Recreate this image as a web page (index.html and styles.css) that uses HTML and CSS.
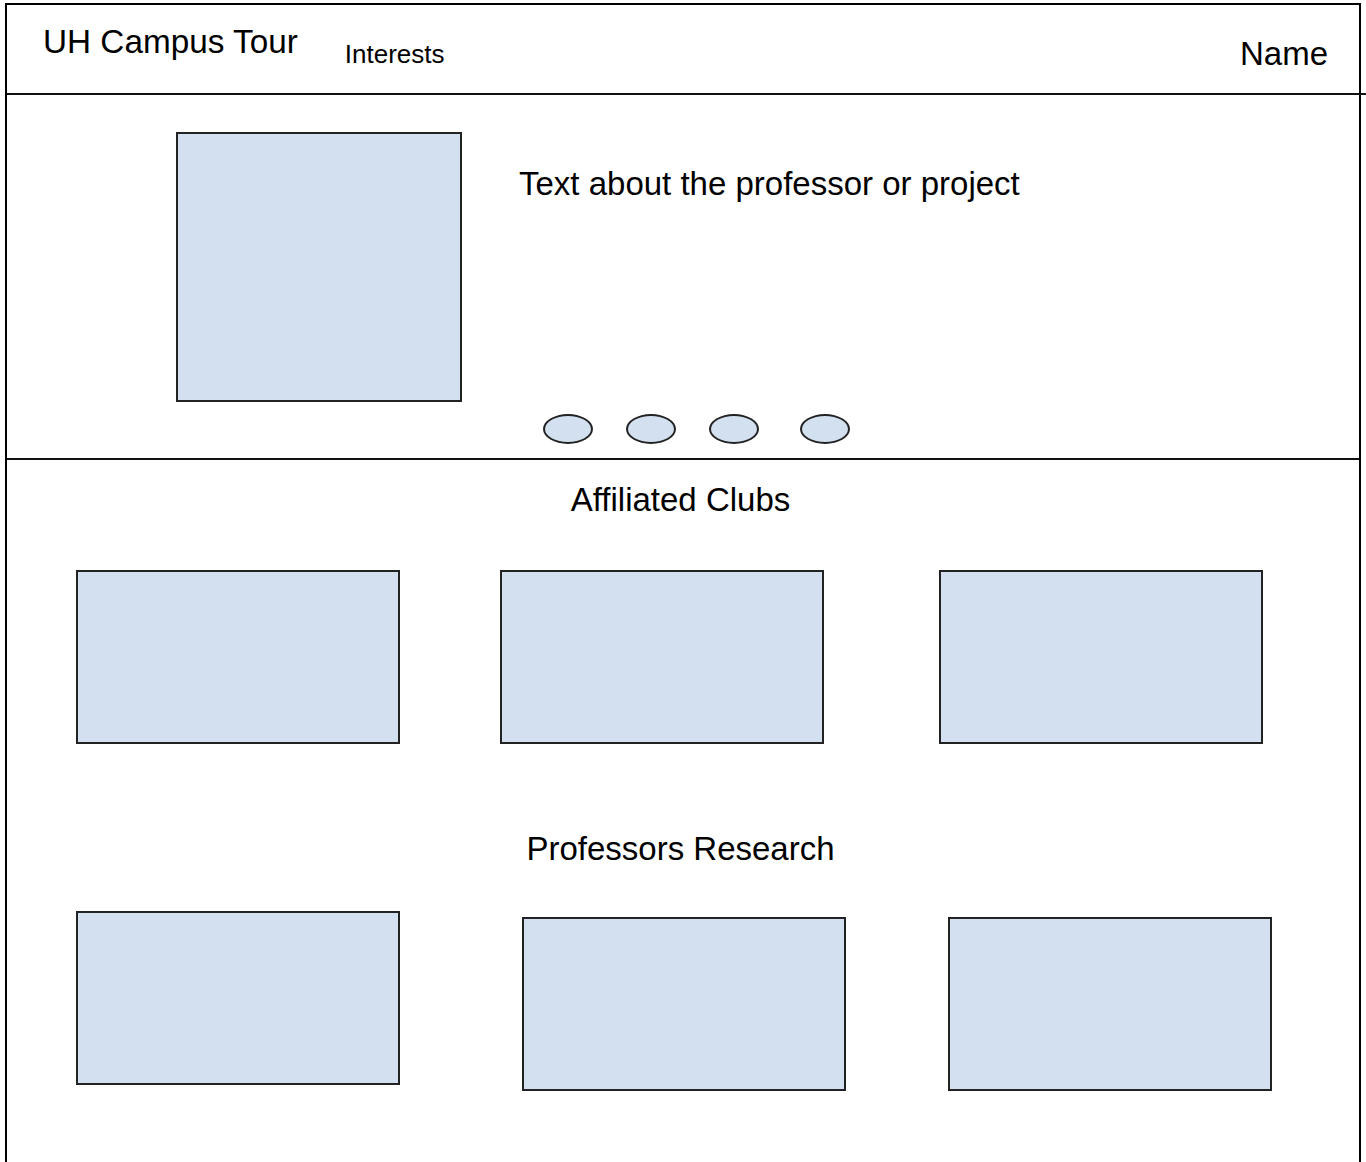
FILE: index.html
```html
<!DOCTYPE html>
<html lang="en">
<head>
<meta charset="utf-8">
<title>UH Campus Tour</title>
<link rel="stylesheet" href="styles.css">
</head>
<body>
<div class="frame">
  <header class="header">
    <div class="brand">UH Campus Tour</div>
    <nav class="nav"><span class="nav-link">Interests</span></nav>
    <div class="user">Name</div>
  </header>

  <section class="hero">
    <div class="hero-main">
      <div class="hero-image"></div>
      <p class="hero-text">Text about the professor or project</p>
    </div>
    <div class="dots">
      <span class="dot"></span>
      <span class="dot"></span>
      <span class="dot"></span>
      <span class="dot"></span>
    </div>
  </section>

  <section class="content">
    <h2 class="section-title clubs-title">Affiliated Clubs</h2>
    <div class="card-row clubs-row">
      <div class="card"></div>
      <div class="card"></div>
      <div class="card"></div>
    </div>

    <h2 class="section-title research-title">Professors Research</h2>
    <div class="card-row research-row">
      <div class="card"></div>
      <div class="card"></div>
      <div class="card"></div>
    </div>
  </section>
</div>
</body>
</html>
```

FILE: styles.css
```css
* {
  box-sizing: border-box;
}

html, body {
  margin: 0;
  padding: 0;
  background: #ffffff;
}

body {
  font-family: "Liberation Sans", Arial, sans-serif;
  color: #000;
  overflow: hidden;
}

.frame {
  margin: 3px 0 0 5px;
  width: 1356px;
  height: 1159px;
  border: 2px solid #000;
  border-bottom: none;
}

/* Header */
.header {
  display: flex;
  align-items: flex-start;
  height: 90px;
  margin-right: -7px;
  border-bottom: 2px solid #111;
}

.brand {
  font-size: 33.3px;
  line-height: normal;
  margin: 18px 0 0 36px;
}

.nav {
  margin: 34px 0 0 47px;
  font-size: 26px;
  line-height: normal;
}

.user {
  margin: 30px 38px 0 auto;
  font-size: 33px;
  line-height: normal;
}

/* Hero */
.hero {
  border-bottom: 2px solid #111;
  padding-bottom: 14px;
}

.hero-main {
  display: flex;
  align-items: flex-start;
  padding: 37px 0 0 169px;
}

.hero-image {
  width: 286px;
  height: 270px;
  background: #d3e0f0;
  border: 2px solid #222;
}

.hero-text {
  margin: 33px 0 0 57px;
  font-size: 33px;
  line-height: normal;
}

.dots {
  display: flex;
  gap: 33px;
  margin-top: 12px;
  padding-left: 536px;
}

.dot {
  display: block;
  width: 50px;
  height: 30px;
  border-radius: 50%;
  background: #d3e0f0;
  border: 2px solid #222;
}

.dot:last-child {
  margin-left: 8px;
}

/* Content */
.section-title {
  margin: 0;
  font-weight: normal;
  font-size: 33px;
  line-height: normal;
  text-align: center;
  padding-right: 5px;
}

.clubs-title {
  margin-top: 21px;
}

.research-title {
  margin-top: 86px;
}

.card-row {
  display: flex;
  align-items: flex-start;
  padding-left: 69px;
}

.clubs-row {
  margin-top: 51px;
}

.research-row {
  margin-top: 43px;
}

.card {
  width: 324px;
  height: 174px;
  background: #d3e0f0;
  border: 2px solid #222;
}

.clubs-row .card:nth-child(2) {
  margin-left: 100px;
}

.clubs-row .card:nth-child(3) {
  margin-left: 115px;
}

.research-row .card:nth-child(2) {
  margin: 6px 0 0 122px;
}

.research-row .card:nth-child(3) {
  margin: 6px 0 0 102px;
}
```
